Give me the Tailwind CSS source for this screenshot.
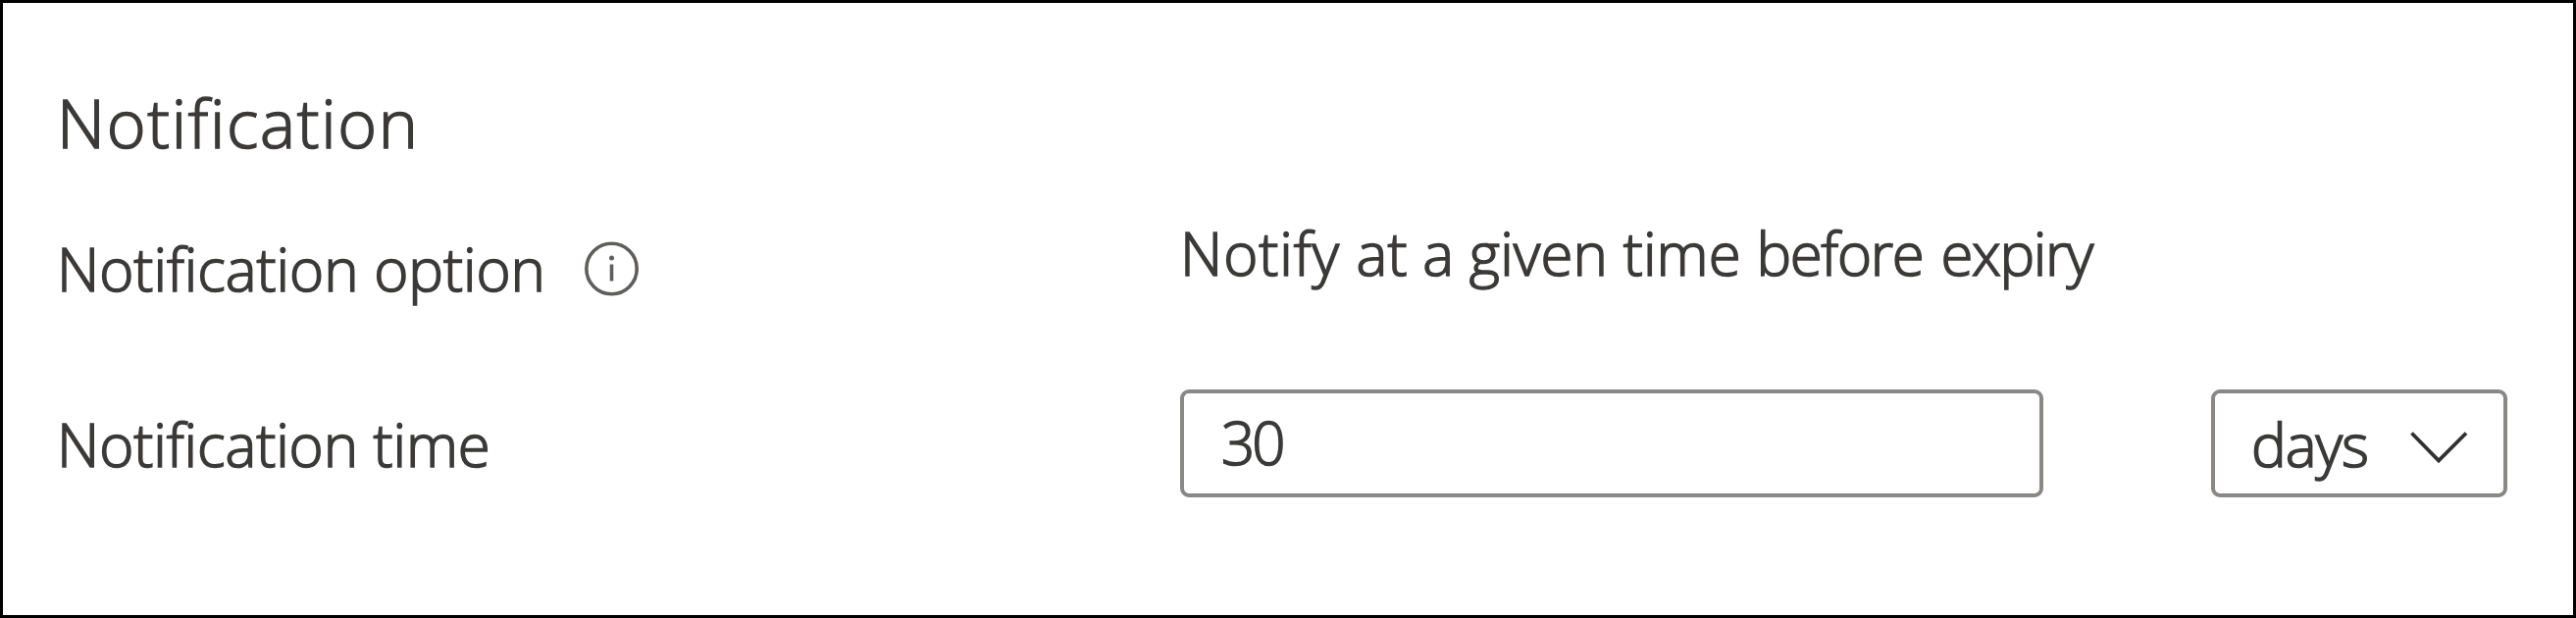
<!DOCTYPE html>
<html lang="en">
<head>
<meta charset="utf-8">
<title>Notification</title>
<script src="https://cdn.jsdelivr.net/npm/@tailwindcss/browser@4"></script>
</head>
<body class="bg-white">
<main class="box-border h-[630px] w-[2626px] overflow-hidden border-[3px] border-black bg-white pl-[55px] pt-[77px] font-['Open_Sans',sans-serif] text-[60px] font-light leading-[80px] text-[#3b3a39] whitespace-nowrap [font-variant-ligatures:none] [-webkit-text-stroke:1.6px_#3b3a39]">
  <h2 class="h-[90px] text-[68px] font-light leading-[90px] tracking-[1.7px]">Notification</h2>
  <div class="mt-[47px] flex h-[97px] items-start">
    <div class="flex w-[1145px] items-center pt-[17px]">
      <span class="w-[536px] tracking-[-0.05px]">Notification option</span>
      <svg class="-mt-[2px] size-[60px]" viewBox="0 0 60 60" fill="none" stroke="#605e5c">
        <circle cx="29.5" cy="31" r="25.7" stroke-width="3.6"/>
        <path d="M29.5 26.5V43.5" stroke-width="3.6"/>
        <circle cx="29.5" cy="20" r="2.5" fill="#605e5c" stroke="none"/>
      </svg>
    </div>
    <span class="pt-px"><span class="tracking-[0.9px]">Notify </span><span class="tracking-[0.1px]">at a given time </span><span class="mr-[4px] tracking-[-1.4px]">before </span><span class="tracking-[-1.4px]">expiry</span></span>
  </div>
  <div class="mt-[83px] flex h-[110px] items-start">
    <label class="w-[1145px] pt-[16px] tracking-[-0.1px]">Notification time</label>
    <div class="h-[110px] w-[880px] rounded-[9px] border-4 border-[#8a8886] pl-[38px] pt-[10px] tracking-[-3px]">30</div>
    <div class="ml-[171px] flex h-[110px] w-[302px] rounded-[9px] border-4 border-[#8a8886] pl-[37px] pt-[12px]">
      <span class="w-[157px] tracking-[-1px]">days</span>
      <svg class="mt-[16px] h-[50px] w-[70px]" viewBox="0 0 70 50" fill="none" stroke="#323130" stroke-width="3.8">
        <path d="M6.5 12.5L34 40.5L62 12.5"/>
      </svg>
    </div>
  </div>
</main>
</body>
</html>
